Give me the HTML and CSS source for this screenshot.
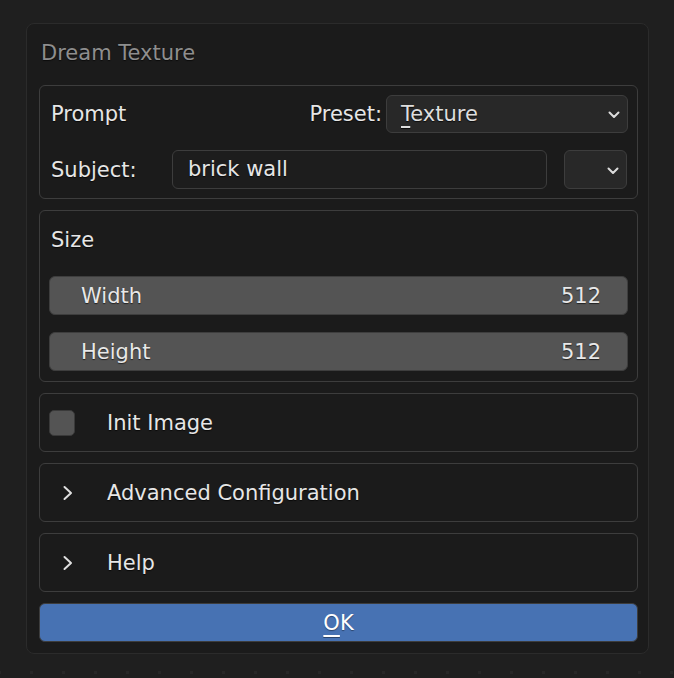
FILE: index.html
```html
<!DOCTYPE html>
<html>
<head>
<meta charset="utf-8">
<link rel="stylesheet" href="styles.css">
</head>
<body>
<div class="dialog">
  <div class="title">Dream Texture</div>
  <div class="stack">
    <div class="panel p-prompt">
      <div class="row">
        <span class="label grow">Prompt</span>
        <span class="label">Preset:</span>
        <div class="dropdown preset">
          <span class="dd-text"><span class="ul">T</span>exture</span>
          <svg class="chev" width="12" height="8" viewBox="0 0 12 8"><path d="M1.5 1.5 L6 6 L10.5 1.5" fill="none" stroke="#dcdcdc" stroke-width="2" stroke-linecap="round" stroke-linejoin="round"/></svg>
        </div>
      </div>
      <div class="row">
        <span class="label subj">Subject:</span>
        <div class="textfield">brick wall</div>
        <div class="dropdown small">
          <svg class="chev" width="12" height="8" viewBox="0 0 12 8"><path d="M1.5 1.5 L6 6 L10.5 1.5" fill="none" stroke="#dcdcdc" stroke-width="2" stroke-linecap="round" stroke-linejoin="round"/></svg>
        </div>
      </div>
    </div>
    <div class="panel p-size">
      <div class="row"><span class="label">Size</span></div>
      <div class="slider"><span>Width</span><span>512</span></div>
      <div class="slider"><span>Height</span><span>512</span></div>
    </div>
    <div class="panel p-line">
      <div class="row">
        <span class="checkbox"></span>
        <span class="label item">Init Image</span>
      </div>
    </div>
    <div class="panel p-line">
      <div class="row">
        <svg class="arrow" width="12" height="16" viewBox="0 0 12 16"><path d="M2.5 2 L9 8 L2.5 14" fill="none" stroke="#e0e0e0" stroke-width="2" stroke-linecap="round" stroke-linejoin="round"/></svg>
        <span class="label item">Advanced Configuration</span>
      </div>
    </div>
    <div class="panel p-line">
      <div class="row">
        <svg class="arrow" width="12" height="16" viewBox="0 0 12 16"><path d="M2.5 2 L9 8 L2.5 14" fill="none" stroke="#e0e0e0" stroke-width="2" stroke-linecap="round" stroke-linejoin="round"/></svg>
        <span class="label item">Help</span>
      </div>
    </div>
    <div class="ok"><span class="ul">O</span>K</div>
  </div>
</div>
</body>
</html>
```
FILE: styles.css
```css
html, body {
  margin: 0;
  padding: 0;
}
body {
  width: 674px;
  height: 678px;
  background-color: #1f1f1f;
  background-image: linear-gradient(to right, #272727 3px, transparent 3px);
  background-size: 32px 3px;
  background-repeat: repeat-x;
  background-position: 30px 671px;
  font-family: "DejaVu Sans", sans-serif;
  font-size: 21px;
  color: #e6e6e6;
  overflow: hidden;
  padding-top: 23px;
  box-sizing: border-box;
}
.dialog {
  margin-left: 26px;
  width: 623px;
  height: 631px;
  box-sizing: border-box;
  background: #1b1b1b;
  border: 1px solid #2b2b2b;
  border-radius: 8px;
  padding: 0 10px 0 12px;
}
.title {
  height: 61px;
  line-height: 59px;
  padding-left: 2px;
  color: #8e8e8e;
  text-shadow: 0 1px 1px rgba(0,0,0,0.6);
}
.stack {
  display: flex;
  flex-direction: column;
  gap: 11px;
}
.panel {
  border: 1px solid #3d3d3d;
  border-radius: 6px;
  padding: 9px;
  display: flex;
  flex-direction: column;
  gap: 17px;
  box-sizing: border-box;
}
.p-prompt { height: 114px; }
.p-size { height: 172px; }
.p-line { height: 59px; }
.row {
  height: 39px;
  display: flex;
  align-items: center;
}
.label {
  padding-left: 2px;
  text-shadow: 0 1px 1px rgba(0,0,0,0.7);
  white-space: nowrap;
}
.grow { flex: 1; }
.dropdown {
  height: 38px;
  box-sizing: border-box;
  background: #282828;
  border: 1px solid #3d3d3d;
  border-radius: 6px;
  display: flex;
  align-items: center;
  position: relative;
}
.preset {
  width: 242px;
  margin-left: 4px;
  padding-left: 14px;
}
.dd-text {
  color: #dedede;
  flex: 1;
  text-shadow: 0 1px 1px rgba(0,0,0,0.7);
}
.ul {
  text-decoration: underline;
  text-underline-offset: 5px;
  text-decoration-thickness: 2px;
}
.chev {
  margin-right: 7px;
  margin-top: 2px;
}
.subj { width: 121px; }
.textfield {
  width: 375px;
  height: 39px;
  box-sizing: border-box;
  background: #1d1d1d;
  border: 1px solid #3d3d3d;
  border-radius: 6px;
  padding-left: 15px;
  line-height: 37px;
  text-shadow: 0 1px 1px rgba(0,0,0,0.7);
}
.small {
  width: 63px;
  height: 39px;
  margin-left: 17px;
  justify-content: flex-end;
}
.slider {
  height: 39px;
  box-sizing: border-box;
  background: #545454;
  border: 1px solid #3e3e3e;
  border-radius: 6px;
  display: flex;
  justify-content: space-between;
  align-items: center;
  padding: 0 26px 0 31px;
  color: #e8e8e8;
  text-shadow: 0 1px 1px rgba(0,0,0,0.6);
}
.checkbox {
  width: 26px;
  height: 26px;
  box-sizing: border-box;
  background: #545454;
  border: 1px solid #3a3a3a;
  border-radius: 5px;
}
.arrow {
  margin-left: 13px;
  margin-top: 1px;
}
.checkbox + .item { margin-left: 30px; }
.arrow + .item { margin-left: 31px; }
.ok {
  height: 39px;
  box-sizing: border-box;
  background: #4772b3;
  border: 1px solid #3d3d3d;
  border-radius: 6px;
  display: flex;
  align-items: center;
  justify-content: center;
  color: #ffffff;
  text-shadow: 0 1px 1px rgba(0,0,0,0.4);
  line-height: 36px;
}
```
